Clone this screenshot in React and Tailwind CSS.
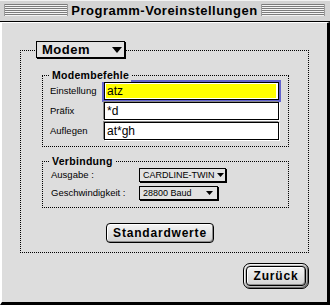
const chicago = "font-['Liberation_Sans',Arial,sans-serif] font-bold";
const geneva = "font-['Liberation_Sans',Arial,sans-serif]";
const texture =
  'bg-[#dddddd] bg-[radial-gradient(circle,#cfcfcf_0.6px,transparent_0.7px)] bg-[length:4px_4px]';

function Stripes() {
  return (
    <div className="flex-1 h-[12px] bg-[repeating-linear-gradient(to_bottom,#7c7c7c_0px,#7c7c7c_1px,#f4f4f4_1px,#f4f4f4_2px)] border-l border-r border-[#9a9a9a]" />
  );
}

function Triangle({ w = 7, h = 4 }) {
  return (
    <svg width={w} height={h} viewBox={`0 0 ${w} ${h}`} className="block">
      <polygon points={`0,0 ${w},0 ${w / 2},${h}`} fill="#000" />
    </svg>
  );
}

function SmallPopup({ text, width, gap }) {
  return (
    <div
      className={`flex items-center h-[14px] border border-black bg-[#e2e2e2] shadow-[1px_1px_0_#000] pl-[3px] ${width} ${gap}`}
    >
      <span className={`${geneva} text-[9px] leading-[12px] whitespace-nowrap`}>{text}</span>
      <span className="ml-auto">
        <Triangle />
      </span>
    </div>
  );
}

function Field({ value, focused }) {
  if (focused) {
    return (
      <div className="w-[175px] h-[18px] border border-black bg-white shadow-[0_0_0_2px_#6464cf] pt-[1px] pb-[1px] pl-[1px] pr-[2px]">
        <div className="h-full bg-[#ffff00] pl-[1px] flex items-center">
          <span className={`${geneva} text-[12px] leading-[14px]`}>{value}</span>
        </div>
      </div>
    );
  }
  return (
    <div className="w-[175px] h-[18px] border border-black bg-white shadow-[-1px_-1px_0_#8a8a8a,1px_1px_0_#ffffff] pl-[2px] flex items-center">
      <span className={`${geneva} text-[12px] leading-[14px]`}>{value}</span>
    </div>
  );
}

function Group({ title, children, className }) {
  return (
    <div className={`relative w-[247px] border border-dotted border-black ${className}`}>
      <span
        className={`absolute top-[-8px] left-[7px] px-[2px] bg-[#dddddd] ${chicago} text-[10.5px] leading-[14px] tracking-[0.3px]`}
      >
        {title}
      </span>
      {children}
    </div>
  );
}

export default function App() {
  return (
    <div className="w-[330px] h-[305px] flex flex-col overflow-hidden text-black">
      {/* Title bar */}
      <div className="h-[22px] flex items-start pt-[4px] pl-[4px] pr-[5px] bg-[#d4d4d4] border-b border-black shadow-[inset_0_1px_0_#f2f2f2]">
        <Stripes />
        <span className={`${chicago} text-[13px] leading-[13px] tracking-[0.5px] px-[3px]`}>
          Programm-Voreinstellungen
        </span>
        <Stripes />
      </div>

      {/* Body */}
      <div
        className={`flex-1 flex flex-col ${texture} border-l-2 border-l-white border-t border-t-white border-r-[3px] border-r-black border-b-[3px] border-b-black pt-[27px] pl-[18px] pr-[18px]`}
      >
        <div className="relative h-[203px] border border-dotted border-black pl-[21px] pt-[24px]">
          {/* Modem popup over the border */}
          <div className="absolute top-[-10px] left-[15px] w-[89px] h-[17px] flex items-center pl-[5px] pr-[2px] border border-black bg-[#e2e2e2] shadow-[1px_1px_0_#000]">
            <span className={`${chicago} text-[13px] leading-[15px] tracking-[0.5px]`}>Modem</span>
            <span className="ml-auto">
              <Triangle w={10} h={6} />
            </span>
          </div>

          <Group title="Modembefehle" className="pt-[6px] pb-[6px] pl-[7px]">
            <div className="flex flex-col gap-[2px]">
              {[
                ['Einstellung', 'atz', true],
                ['Präfix', '*d', false],
                ['Auflegen', 'at*gh', false],
              ].map(([label, value, focused]) => (
                <div key={label} className="flex items-center">
                  <span className={`w-[54px] ${geneva} text-[9.5px] leading-[12px] whitespace-nowrap`}>{label}</span>
                  <Field value={value} focused={focused} />
                </div>
              ))}
            </div>
          </Group>

          <Group title="Verbindung" className="mt-[14px] pt-[6px] pb-[7px] pl-[8px]">
            <div className="flex flex-col gap-[4px]">
              <div className="flex items-center">
                <span className={`w-[88px] ${geneva} text-[9.5px] leading-[12px] whitespace-nowrap`}>Ausgabe :</span>
                <SmallPopup text="CARDLINE-TWIN" width="w-[87px]" gap="pr-[1px]" />
              </div>
              <div className="flex items-center">
                <span className={`w-[88px] ${geneva} text-[9.5px] leading-[12px] whitespace-nowrap`}>Geschwindigkeit :</span>
                <SmallPopup text="28800 Baud" width="w-[79px]" gap="pr-[4px]" />
              </div>
            </div>
          </Group>

          <button
            className={`mt-[15px] ml-[64px] w-[108px] h-[20px] rounded-[4px] border border-black bg-[linear-gradient(to_bottom,#f4f4f4,#d2d2d2)] shadow-[inset_1px_1px_0_#ffffff,inset_-1px_-1px_0_#8c8c8c] ${chicago} text-[12px] leading-[14px] tracking-[0.8px] flex items-center justify-center`}
          >
            Standardwerte
          </button>
        </div>

        {/* Default button */}
        <div className="self-end mt-[10px] w-[66px] h-[26px] rounded-[7px] border border-black bg-[#bdbdbd] shadow-[inset_1px_1px_0_#f4f4f4,inset_-1px_-1px_0_#6e6e6e] p-[2px]">
          <button
            className={`w-full h-full rounded-[4px] border border-black bg-[linear-gradient(to_bottom,#f4f4f4,#d2d2d2)] shadow-[inset_1px_1px_0_#ffffff,inset_-1px_-1px_0_#8c8c8c] ${chicago} text-[12px] leading-[14px] tracking-[0.8px] flex items-center justify-center`}
          >
            Zurück
          </button>
        </div>
      </div>
    </div>
  );
}
